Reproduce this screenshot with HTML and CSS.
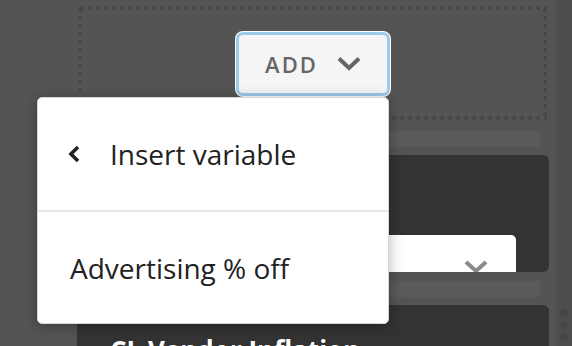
FILE: index.html
```html
<!DOCTYPE html>
<html lang="en">
<head>
  <meta charset="UTF-8" />
  <title>Builder</title>
  <link rel="stylesheet" href="styles.css">
</head>
<body>

  <div class="page">
    <!-- colonna principale -->
    <main class="canvas">
      <div class="dropzone">
        <button class="add-btn">
          <span>ADD</span>
          <svg width="24" height="15" viewBox="0 0 24 15"><path d="M2 2.5 L12 12 L22 2.5" fill="none" stroke="#666" stroke-width="4"/></svg>
        </button>
      </div>

      <div class="gap-bar"></div>

      <div class="card">
        <div class="select">
          <svg width="24" height="14" viewBox="0 0 24 14"><path d="M2 2 L12 11 L22 2" fill="none" stroke="#8a8a8a" stroke-width="4"/></svg>
        </div>
      </div>

      <div class="gap-bar"></div>

      <div class="card card-title">CL Vendor Inflation</div>
    </main>

    <!-- barra laterale -->
    <aside class="side">
      <div class="handle">
        <span></span><span></span><span></span>
      </div>
    </aside>
  </div>

  <!-- MENU A TENDINA -->
  <div class="menu">
    <div class="menu-item menu-back">
      <svg width="12" height="18" viewBox="0 0 12 18"><path d="M10 2 L3 9 L10 16" fill="none" stroke="#222" stroke-width="3.6"/></svg>
      <span>Insert variable</span>
    </div>
    <div class="menu-item">Advertising % off</div>
  </div>

</body>
</html>
```

FILE: styles.css
```css
body {
  margin: 0;
  background: #545454;
  font-family: 'Open Sans', 'Liberation Sans', sans-serif;
  overflow: hidden;
}

.page {
  display: flex;
  height: 346px;
}

.canvas {
  width: 472px;
  margin-left: 77px;
}

/* zona tratteggiata */
.dropzone {
  margin: 6px 2px 0 1px;
  height: 114px;
  display: flex;
  align-items: center;
  justify-content: center;
  background:
    radial-gradient(circle, #474747 1.7px, transparent 2.2px) 0 0 / 8px 4px repeat-x,
    radial-gradient(circle, #474747 1.7px, transparent 2.2px) 0 100% / 8px 4px repeat-x,
    radial-gradient(circle, #474747 1.7px, transparent 2.2px) 0 0 / 4px 8px repeat-y,
    radial-gradient(circle, #474747 1.7px, transparent 2.2px) 100% 0 / 4px 8px repeat-y;
}

.add-btn {
  width: 154px;
  height: 64px;
  margin-top: 1px;
  background: #f5f5f5;
  border: 3px solid #9dcbea;
  border-radius: 7px;
  box-shadow: 0 0 0 1px #fff;
  display: flex;
  align-items: center;
  justify-content: center;
  gap: 19px;
  font-family: 'Open Sans', sans-serif;
  font-size: 22px;
  font-weight: 600;
  letter-spacing: 2px;
  color: #666;
  padding: 0 0 0 1px;
}

.gap-bar {
  margin-top: 11px;
  width: 463px;
  height: 16px;
  background: #5a5a5a;
}

.card {
  margin-top: 8px;
  height: 117px;
  background: #333;
  border-radius: 6px;
  overflow: hidden;
}

.card + .gap-bar {
  margin-top: 9px;
}

.select {
  margin: 80px 33px 0 20px;
  height: 50px;
  background: #fff;
  border-radius: 5px;
  display: flex;
  justify-content: flex-end;
  padding: 25px 28px 0 0;
  box-sizing: border-box;
}

.card-title {
  height: 60px;
  color: #fff;
  font-size: 26px;
  font-weight: 700;
  padding: 27px 0 0 33px;
  box-sizing: border-box;
  line-height: 36px;
}

.side {
  margin-left: 7px;
  flex: 1;
  background: #4e4e4e;
  display: flex;
  flex-direction: column;
  justify-content: flex-end;
}

.handle {
  display: flex;
  flex-direction: column;
  align-items: center;
  gap: 4px;
  padding: 0 0 5px;
}

.handle span {
  width: 8px;
  height: 8px;
  border-radius: 50%;
  background: #464646;
}

/* MENU */
.menu {
  position: absolute;
  left: 37px;
  top: 97px;
  width: 352px;
  height: 227px;
  background: #fff;
  border: 1px solid #d6d6d6;
  border-radius: 5px;
  box-sizing: border-box;
  box-shadow: 0 2px 14px rgba(0, 0, 0, 0.3);
  color: #222;
  font-size: 28px;
}

.menu-item {
  height: 112px;
  display: flex;
  align-items: center;
  padding-left: 32px;
}

.menu-back {
  border-bottom: 2px solid #e6e6e6;
  padding-left: 30px;
  gap: 30px;
}
```
